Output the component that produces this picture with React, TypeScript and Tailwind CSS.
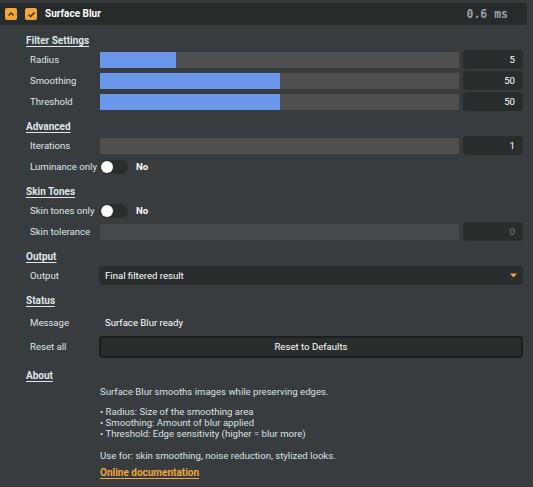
import React from "react";

type SliderRowProps = {
  label: string;
  value: number;
  pct: number;
  disabled?: boolean;
};

function Heading({ children }: { children: React.ReactNode }) {
  return (
    <div className="flex h-[14px] items-center pl-[26px]">
      <span className="text-[10px] font-bold text-[#dfe5ea] underline underline-offset-[2px]">{children}</span>
    </div>
  );
}

function Label({ children }: { children: React.ReactNode }) {
  return <div className="w-[100px] shrink-0 whitespace-nowrap pl-[30px] text-[#dfe4e8]">{children}</div>;
}

function SliderRow({ label, value, pct, disabled }: SliderRowProps) {
  return (
    <div className="flex h-[19px] items-center pr-[10px]">
      <Label>{label}</Label>
      <div className={`relative h-[16px] flex-1 ${disabled ? "bg-[#45494b]" : "bg-[#4f4f4f]"}`}>
        <div className="absolute inset-y-0 left-0 bg-[#6b97ea]" style={{ width: `${pct}%` }} />
      </div>
      <div
        className={`ml-[4px] flex h-[19px] w-[60px] items-center justify-end rounded-[4px] bg-[#2a2d2e] pr-[8px] ${
          disabled ? "text-[#7a7e80]" : "text-white"
        }`}
      >
        {value}
      </div>
    </div>
  );
}

function ToggleRow({ label }: { label: string }) {
  return (
    <div className="flex h-[19px] items-center">
      <Label>{label}</Label>
      <div className="flex h-[14px] w-[28px] items-center rounded-full bg-[#2a2d2e]">
        <div className="ml-[1px] h-[12px] w-[12px] rounded-full bg-white" />
      </div>
      <span className="ml-[8px] font-bold text-white">No</span>
    </div>
  );
}

function Section({ title, children }: { title: string; children: React.ReactNode }) {
  return (
    <div className="pt-[9px]">
      <Heading>{title}</Heading>
      <div className="mt-[2px] flex flex-col gap-[2px]">{children}</div>
    </div>
  );
}

export default function App() {
  return (
    <div
      className="min-h-[487px] w-[533px] bg-[#383c3f] pt-[3px] text-[9.6px] leading-[12px] text-[#dfe4e8]"
      style={{ fontFamily: "Roboto, 'Noto Sans', sans-serif" }}
    >
      <div className="mr-[6px] flex h-[22px] items-center bg-[#282b2c]">
        <div className="ml-[5px] flex h-[12px] w-[12px] items-center justify-center rounded-[2px] bg-[#f2a53a]">
          <svg width="8" height="8" viewBox="0 0 8 8" fill="none">
            <path d="M1.5 5.5 L4 3 L6.5 5.5" stroke="#3a2d15" strokeWidth="1.3" />
          </svg>
        </div>
        <div className="ml-[8px] flex h-[12px] w-[12px] items-center justify-center rounded-[2px] bg-[#f2a53a]">
          <svg width="9" height="9" viewBox="0 0 9 9" fill="none">
            <path d="M1.5 4.5 L3.6 6.6 L7.5 2.5" stroke="#3a2d15" strokeWidth="1.4" />
          </svg>
        </div>
        <span className="ml-[8px] text-[10px] font-bold text-white">Surface Blur</span>
        <span
          className="ml-auto mr-[19px] text-[11.5px] font-bold text-[#98a1a8]"
          style={{ fontFamily: "'DejaVu Sans Mono', monospace" }}
        >
          0.6 ms
        </span>
      </div>

      <Section title="Filter Settings">
        <SliderRow label="Radius" value={5} pct={21.2} />
        <SliderRow label="Smoothing" value={50} pct={50} />
        <SliderRow label="Threshold" value={50} pct={50} />
      </Section>

      <Section title="Advanced">
        <SliderRow label="Iterations" value={1} pct={0} />
        <ToggleRow label="Luminance only" />
      </Section>

      <Section title="Skin Tones">
        <ToggleRow label="Skin tones only" />
        <SliderRow label="Skin tolerance" value={0} pct={0} disabled />
      </Section>

      <Section title="Output">
        <div className="flex h-[19px] items-center pr-[10px]">
          <Label>Output</Label>
          <div className="-ml-[1px] flex h-[19px] flex-1 items-center rounded-[4px] bg-[#2a2d2e] pl-[6px] pr-[6px] text-white">
            <span>Final filtered result</span>
            <svg className="ml-auto" width="7" height="5" viewBox="0 0 7 5">
              <path d="M0 0.5 H7 L3.5 4.5 Z" fill="#f2a53a" />
            </svg>
          </div>
        </div>
      </Section>

      <div className="pt-[9px]">
        <Heading>Status</Heading>
        <div className="flex h-[26px] items-center pt-[3px]">
          <Label>Message</Label>
          <span className="pl-[5px] text-white">Surface Blur ready</span>
        </div>
        <div className="mt-[2px] flex h-[22px] items-center pr-[10px]">
          <Label>Reset all</Label>
          <button className="-ml-[1px] h-[22px] flex-1 rounded-[4px] border-2 border-[#1c1e1f] bg-[#2a2d2e] text-white">
            Reset to Defaults
          </button>
        </div>
      </div>

      <div className="pt-[11px]">
        <Heading>About</Heading>
        <div className="pl-[100px] text-[#dbe0e4]">
          <p className="py-[3px] leading-[11px]">Surface Blur smooths images while preserving edges.</p>
          <div className="mt-[6px] leading-[11px]">
            <p>• Radius: Size of the smoothing area</p>
            <p>• Smoothing: Amount of blur applied</p>
            <p>• Threshold: Edge sensitivity (higher = blur more)</p>
          </div>
          <p className="mt-[11px] leading-[11px]">Use for: skin smoothing, noise reduction, stylized looks.</p>
          <p className="mt-[6px] text-[10px] font-bold leading-[11px] text-[#f2a53a] underline underline-offset-[2px]">
            Online documentation
          </p>
        </div>
      </div>
    </div>
  );
}
